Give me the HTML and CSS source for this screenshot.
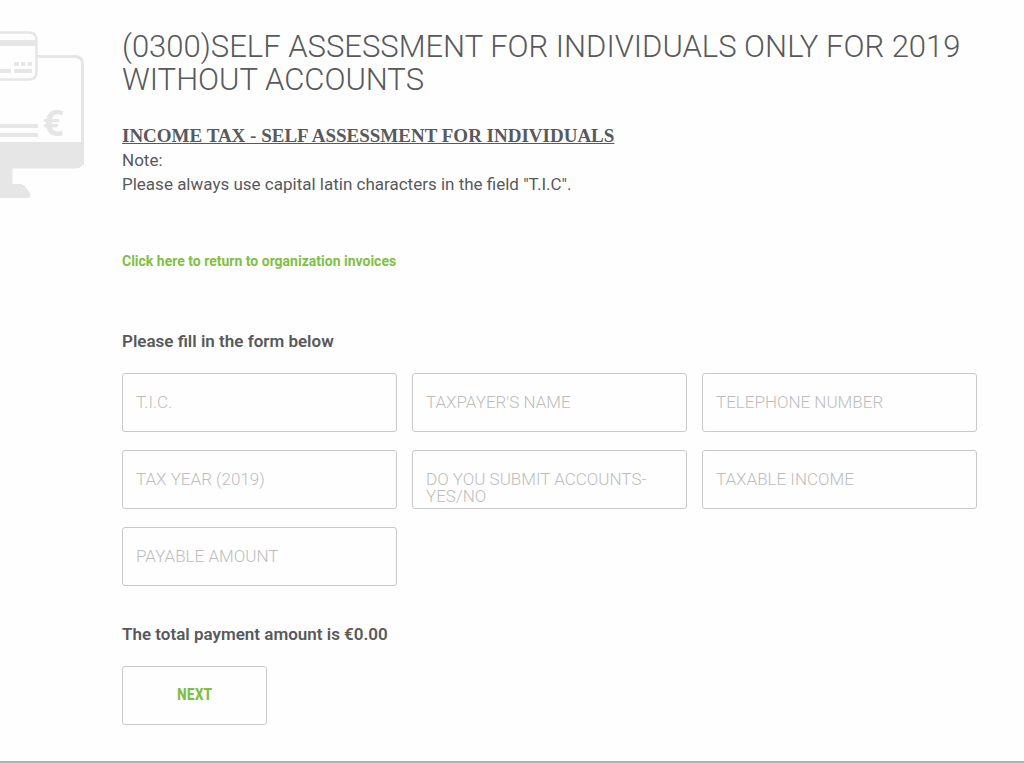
FILE: index.html
```html
<!DOCTYPE html>
<html lang="en">
<head>
<meta charset="utf-8">
<meta name="viewport" content="width=device-width, initial-scale=1">
<title>Self assessment for individuals</title>
<link rel="stylesheet" href="styles.css">
</head>
<body>
<main class="page">
  <div class="art" aria-hidden="true">
    <svg class="art-svg" width="84" height="170" viewBox="0 0 84 170">
      <g fill="none" stroke="#e6e6e6">
        <path d="M37 26.500H75Q82.500 26.500 82.500 34V135" stroke-width="3"/>
        <path d="M-2 2.500H29Q36.500 2.500 36.500 10V42Q36.500 49.500 29 49.500H-2" stroke-width="2.500"/>
      </g>
      <g fill="#e6e6e6">
        <path d="M0 10h36v6H0zM14 32h5v4h-5zM21 32h4v4h-4zM28 32h4v4h-4zM0 39h11v4H0zM14 39h18v4H14z"/>
        <path d="M0 94h38v4H0zM0 103h38v4H0z"/>
        <path d="M0 112H84V129Q84 138.500 75 138.500H12.500V154H21Q23 154 24.500 156L30 163Q32.500 168 27 168H0z"/>
        <text class="art-euro" x="43" y="106">€</text>
      </g>
    </svg>
  </div>
  <div class="content">
    <h1 class="title">(0300)SELF ASSESSMENT FOR INDIVIDUALS ONLY FOR 2019 WITHOUT ACCOUNTS</h1>
    <div class="notes">
      <h2 class="notes-heading">INCOME TAX - SELF ASSESSMENT FOR INDIVIDUALS</h2>
      <p class="note">Note:</p>
      <p class="note">Please always use capital latin characters in the field "T.I.C".</p>
    </div>
    <a class="return-link" href="#">Click here to return to organization invoices</a>
    <form class="form">
      <p class="strong-line">Please fill in the form below</p>
      <div class="fields">
        <div class="field"><input class="input" id="tic" type="text"><label class="label" for="tic">T.I.C.</label></div>
        <div class="field"><input class="input" id="name" type="text"><label class="label" for="name">TAXPAYER'S NAME</label></div>
        <div class="field"><input class="input" id="phone" type="tel"><label class="label" for="phone">TELEPHONE NUMBER</label></div>
        <div class="field"><input class="input" id="year" type="text"><label class="label" for="year">TAX YEAR (2019)</label></div>
        <div class="field"><input class="input" id="accounts" type="text"><label class="label" for="accounts">DO YOU SUBMIT ACCOUNTS-YES/NO</label></div>
        <div class="field"><input class="input" id="income" type="text"><label class="label" for="income">TAXABLE INCOME</label></div>
        <div class="field"><input class="input" id="amount" type="text"><label class="label" for="amount">PAYABLE AMOUNT</label></div>
      </div>
      <p class="strong-line total">The total payment amount is €0.00</p>
      <button class="next" type="button">NEXT</button>
    </form>
  </div>
</main>
<footer class="footer"></footer>
</body>
</html>
```
FILE: styles.css
```css
* { box-sizing: border-box; }

body {
  margin: 0;
  background: #fefefe;
  color: #58595b;
  font: 17px/24px Roboto, sans-serif;
}

h1, h2, p { margin: 0; }

.page {
  display: flex;
  gap: 38px;
  padding: 30px 47px 36px 0;
}

.art { flex: none; }
.art-svg { display: block; }
.art-euro { font: bold 36px "Open Sans", sans-serif; }

.content { flex: 1; min-width: 0; }

.title {
  margin-bottom: 28px;
  font-size: 31px;
  line-height: 33px;
  font-weight: 300;
}

.notes { margin-bottom: 53px; }

.notes-heading {
  font: bold 19px/24px "Liberation Serif", serif;
  text-decoration: underline;
}

.return-link {
  display: block;
  width: fit-content;
  margin-bottom: 56px;
  color: #7fc043;
  font-size: 14px;
  font-weight: 700;
  text-decoration: none;
}

.strong-line {
  font-size: 17px;
  font-weight: 600;
}

.fields {
  display: grid;
  grid-template-columns: repeat(3, 1fr);
  gap: 18px 15px;
  margin: 20px 0 36px;
}

.field { display: grid; height: 59px; }

.input,
.label { grid-area: 1 / 1; }

.input {
  width: 100%;
  height: 100%;
  padding: 0 14px;
  border: 1px solid #c9c9c9;
  border-radius: 3px;
  background: transparent;
  color: inherit;
  font: inherit;
}

.label {
  padding: 21px 14px 0;
  color: #bdbdbd;
  font-weight: 300;
  line-height: 17px;
  pointer-events: none;
}

.total { margin-bottom: 20px; }

.next {
  display: block;
  height: 59px;
  padding: 0 54px 2px;
  border: 1px solid #c9c9c9;
  border-radius: 3px;
  background: transparent;
  color: #7fc043;
  font: bold 16px "Roboto Condensed", Roboto, sans-serif;
  cursor: pointer;
}

.footer { border-top: 2px solid #b0b0b0; }
```
